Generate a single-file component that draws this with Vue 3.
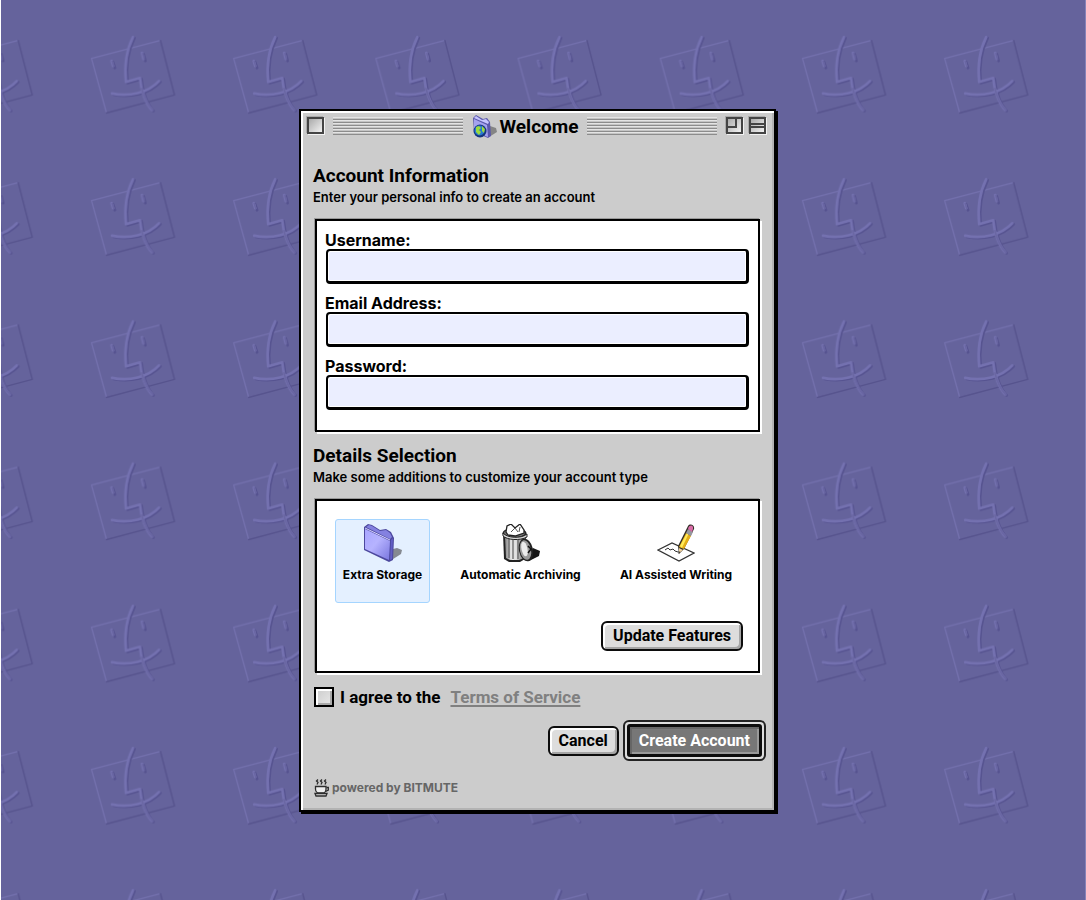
<script setup>
import { ref } from 'vue'

const fields = [
  { id: 'username', label: 'Username:', type: 'text', autocomplete: 'username' },
  { id: 'email', label: 'Email Address:', type: 'email', autocomplete: 'email' },
  { id: 'password', label: 'Password:', type: 'password', autocomplete: 'new-password' },
]
const values = ref({ username: '', email: '', password: '' })

const selected = ref('storage')
const agreed = ref(false)
</script>

<template>
  <div class="desktop">
    <svg class="wallpaper" aria-hidden="true">
      <defs>
        <pattern id="faces" x="78" y="28" width="142.2" height="142.2" patternUnits="userSpaceOnUse">
          <g fill="none" stroke-linecap="round" stroke-linejoin="round">
            <path d="M27.5 85 12.5 30.5 81 12.5" stroke="#7370ad" stroke-width="1.3" />
            <path d="M81.5 12.5 95.5 67 27.5 85" stroke="#56538d" stroke-width="1.5" />
            <g stroke="#565390" stroke-width="2.8" transform="translate(1.4 1)">
              <path d="M54 9C49 19 45 35 47 54L61 50C62 63 67 76 73 82" />
              <path d="M33 65.5C50 69 69 65 80 53" />
              <path d="M32.5 33 34.5 39M63 25 65 32" />
            </g>
            <g stroke="#7471b0" stroke-width="2.6">
              <path d="M54 9C49 19 45 35 47 54L61 50C62 63 67 76 73 82" />
              <path d="M33 65.5C50 69 69 65 80 53" />
              <path d="M32.5 33 34 38M63 25 64.5 31" />
            </g>
            <g stroke="#6966a2" stroke-width="1.5" transform="translate(.6 .4)">
              <path d="M62 60C64 69 68 77 73 82" />
              <path d="M32.5 33 34 38M63 25 64.5 31" />
            </g>
          </g>
        </pattern>
      </defs>
      <rect width="100%" height="100%" fill="url(#faces)" />
    </svg>

    <form class="window" @submit.prevent>
      <header class="titlebar">
        <button type="button" class="box" aria-label="Close"></button>
        <span class="stripes"></span>
        <svg class="title-icon" viewBox="0 0 25 25" aria-hidden="true">
          <path d="M17 23 25 18 24 14 18 12Z" fill="#858585" />
          <path d="M1 4 4 1 11 5 15 4 18 8 19 22 16 24 2 18Z" fill="#5a58ac" />
          <path d="M2 5 15 11 16 23 2 18Z" fill="#a5a3ef" />
          <path d="M2 4 4 2 10 6 14 5 17 8 16 10Z" fill="#c6c5ff" />
          <circle cx="8" cy="17" r="6.5" fill="#15357d" />
          <circle cx="7.5" cy="16.5" r="5" fill="#2879d2" />
          <path d="M4 13 7 12 9 14 7 16 9 18 7 21 4 18ZM10 12 13 15 12 19 10 17Z" fill="#9cda3e" />
        </svg>
        <h1>Welcome</h1>
        <span class="stripes"></span>
        <button type="button" class="box zoom" aria-label="Zoom"><i></i></button>
        <button type="button" class="box collapse" aria-label="Collapse"><i></i></button>
      </header>

      <div class="body">
        <h2>Account Information</h2>
        <p class="hint">Enter your personal info to create an account</p>
        <section class="panel fields">
          <div v-for="f in fields" :key="f.id" class="field">
            <label :for="f.id">{{ f.label }}</label>
            <input :id="f.id" v-model="values[f.id]" :type="f.type" :autocomplete="f.autocomplete" />
          </div>
        </section>

        <h2 class="second">Details Selection</h2>
        <p class="hint">Make some additions to customize your account type</p>
        <section class="panel details">
          <div class="options">
            <button type="button" class="option narrow" :aria-pressed="selected === 'storage'" @click="selected = 'storage'">
              <svg viewBox="0 0 38 38" aria-hidden="true">
                <path d="M26 37 37 30 38 26 33 24 29 25Z" fill="#858991" />
                <path d="M0 3 4 0 8 1 16 6 22 5 27 8 30 14 29 36 25 38 0 26Z" fill="#4c489e" />
                <path d="M2 3 5 1 8 2 16 7 22 6 26 9 28 13 26 15Z" fill="#8481e0" />
                <path d="M1 5 26 17 25 36 1 25Z" fill="url(#folder)" />
                <path d="M1 4 26 16" stroke="#d6d4ff" stroke-width="1" />
                <path d="M27 16 29 14 28 35 26 36Z" fill="#625ec4" />
                <defs>
                  <linearGradient id="folder" x1="0" y1="0" x2="1" y2="1">
                    <stop offset="0" stop-color="#a9a6ff" />
                    <stop offset=".45" stop-color="#b6b3ff" />
                    <stop offset="1" stop-color="#7a77df" />
                  </linearGradient>
                </defs>
              </svg>
              Extra Storage
            </button>
            <button type="button" class="option wide" :aria-pressed="selected === 'archive'" @click="selected = 'archive'">
              <svg viewBox="0 0 38 38" aria-hidden="true">
                <path d="M27 37 37 32 38 27 31 24Z" fill="#171717" />
                <path d="M1 9 24 10 23 35 18 38H7L2 35Z" fill="#222" />
                <path d="M3 12 23 13 22 34 17 36H8L4 34Z" fill="url(#can)" />
                <path d="M7 15V34M11 16V35M16 16V35M20 15V33" stroke="#666" stroke-width="1.3" />
                <path d="M9 16V35M14 16V36" stroke="#eee" stroke-width="1" />
                <ellipse cx="12.5" cy="9.5" rx="12" ry="5.5" fill="#222" />
                <ellipse cx="12.5" cy="9" rx="10.5" ry="4" fill="#777" />
                <path d="M4 8 5 2 9 0 13 4 18 0 22 6 22 9 13 12 6 11Z" fill="#fff" stroke="#222" stroke-width="1.3" />
                <path d="M9 8 13 4 16 8M18 3 17 8" fill="none" stroke="#555" />
                <path d="M1 9C5 14 19 15 25 10V13C18 17 5 16 1 12Z" fill="#d6d6d6" stroke="#222" />
                <ellipse cx="24" cy="26" rx="7" ry="11.5" fill="#222" transform="rotate(-12 24 26)" />
                <ellipse cx="23.5" cy="26" rx="5.5" ry="10" fill="#999" transform="rotate(-12 23.5 26)" />
                <ellipse cx="22.5" cy="25" rx="3" ry="7.5" fill="#ececec" transform="rotate(-12 22.5 25)" />
                <path d="M26 22 29 25 26 29" fill="none" stroke="#111" stroke-width="1.5" />
                <defs>
                  <linearGradient id="can">
                    <stop offset="0" stop-color="#888" />
                    <stop offset=".4" stop-color="#eee" />
                    <stop offset="1" stop-color="#777" />
                  </linearGradient>
                </defs>
              </svg>
              Automatic Archiving
            </button>
            <button type="button" class="option" :aria-pressed="selected === 'writing'" @click="selected = 'writing'">
              <svg viewBox="0 0 38 38" aria-hidden="true">
                <path d="M1 26 15 19 37 29 22 37Z" fill="#fff" stroke="#333" stroke-width="1.3" />
                <path d="M8 26 11 24 13 26 16 25 18 27 21 28" fill="none" stroke="#333" stroke-width="1" />
                <path d="M21 22 31 2C33-1 38 1 37 5L27 25 22 30Z" fill="#302c25" />
                <path d="M22 23 29 9 34 12 27 25Z" fill="#e4ae18" />
                <path d="M23 22 30 9 31.5 10 25 24Z" fill="#ffeb58" />
                <path d="M29 9 31 5 36 8 34 12Z" fill="#96969e" />
                <path d="M31 5C32 0 37 1 36 5L35 8Z" fill="#d96ca8" />
                <path d="M22 24 26 26 22 29Z" fill="#f0d2a0" />
                <path d="M21.5 27 23 28 21.5 30Z" fill="#111" />
              </svg>
              AI Assisted Writing
            </button>
          </div>
          <button type="button" class="push update">Update Features</button>
        </section>

        <div class="agree">
          <input id="agree" v-model="agreed" type="checkbox" />
          <label for="agree">I agree to the</label>
          <a href="#terms">Terms of Service</a>
        </div>

        <div class="actions">
          <button type="button" class="push">Cancel</button>
          <span class="ring"><button type="submit" class="push primary">Create Account</button></span>
        </div>

        <footer>
          <svg viewBox="0 0 15 18" aria-hidden="true">
            <g fill="none" stroke="#2c2c2c" stroke-width="1.3">
              <path d="M4 .5 2.5 2 4 3.5 3 5.5M8 .5 6.5 2 8 3.5 7 5.5M12 .5 10.5 2 12 3.5 11 5.5" />
              <path d="M1.5 7.5H12V10C12 13 10 14 9 14H5C3 14 1.5 12 1.5 10Z" fill="#eee" />
              <path d="M12.5 8.5H14.3V11L11.5 12.5" />
              <path d="M1 14.5H13L12 17H2Z" fill="#ddd" />
            </g>
          </svg>
          powered by BITMUTE
        </footer>
      </div>
    </form>
  </div>
</template>

<style>
body {
  background: #65639c;
}
</style>

<style scoped>
* {
  box-sizing: border-box;
}

.desktop {
  position: relative;
  display: flex;
  justify-content: center;
  align-items: flex-start;
  min-height: 100vh;
  padding: 109px 11px 80px 0;
  border: solid #fff;
  border-width: 0 1px;
  border-right-color: #8583b8;
  background: #65639c;
  color: #000;
  font: bold 16px/18px Roboto, "Liberation Sans", sans-serif;
}

.wallpaper {
  position: absolute;
  inset: 0;
  width: 100%;
  height: 100%;
}

.window {
  position: relative;
  width: 100%;
  max-width: 477px;
  border: 2px solid #000;
  background: #ccc;
  box-shadow: 2px 2px 0 #000, inset 2px 2px 0 #fff, inset -2px -2px 0 #b3b3b3;
}

button {
  padding: 0;
  color: inherit;
  font: inherit;
}

h1,
h2,
p {
  margin: 0;
}

h1,
h2 {
  font-size: 19px;
  line-height: 22px;
}

h1 {
  padding-top: 1px;
}

.titlebar {
  display: flex;
  align-items: center;
  height: 30px;
  padding: 0 8px 0 6px;
}

.box {
  position: relative;
  flex: none;
  width: 17px;
  height: 17px;
  margin-bottom: 2px;
  border: 2px solid #444;
  border-radius: 0;
  background: linear-gradient(135deg, #aaa, #f2f2f2);
  box-shadow: 1px 1px 0 #f2f2f2, -1px -1px 0 #aaa;
}

.zoom i {
  position: absolute;
  top: 0;
  left: 0;
  width: 9px;
  height: 9px;
  border: solid #444;
  border-width: 0 2px 2px 0;
}

.collapse {
  margin-left: 6px;
}

.collapse i {
  position: absolute;
  top: 4px;
  left: 0;
  width: 13px;
  height: 5px;
  border: solid #444;
  border-width: 2px 0;
}

.stripes {
  flex: 1;
  height: 18px;
  margin: 0 9px;
  background: repeating-linear-gradient(#e4e4e4 0 1px, #c4c4c4 1px 2px, #8c8c8c 2px 3px);
}

.title-icon {
  width: 25px;
  height: 25px;
  margin-right: 3px;
}

.body {
  padding: 24px 12px 12px;
}

.second {
  margin-top: 13px;
}

.hint {
  margin: 2px 0 14px;
  font-family: Inter, Roboto, sans-serif;
  font-size: 13px;
  font-weight: 600;
  line-height: 16px;
}

.panel {
  margin: 0 2px;
  border: 2px solid #000;
  background: #fff;
  box-shadow: 2px 2px 0 #fff, -1px -1px 0 #999;
}

.fields {
  display: grid;
  gap: 10px;
  padding: 10px 8px 20px;
}

.field {
  display: grid;
  font-family: Inter, Roboto, sans-serif;
}

.field input {
  height: 35px;
  margin: 0 1px;
  padding: 0 8px;
  border: solid #000;
  border-width: 2px 3px 3px 2px;
  border-radius: 4px;
  outline: none;
  background: #ebeeff;
  box-shadow: inset 1px 1px 0 #fff, inset -1px -1px 0 #fff;
  font: inherit;
}

.details {
  display: flex;
  flex-direction: column;
  padding: 18px 15px 20px 18px;
}

.options {
  display: flex;
  justify-content: space-between;
  padding-right: 2px;
}

.option {
  display: flex;
  flex-direction: column;
  align-items: center;
  gap: 5px;
  width: 130px;
  height: 84px;
  padding-top: 4px;
  border: 1px solid transparent;
  border-radius: 3px;
  background: none;
  font-family: Inter, Roboto, sans-serif;
  font-size: 12px;
  line-height: 16px;
  white-space: nowrap;
}

.narrow {
  width: 95px;
}

.wide {
  width: 140px;
}

.option[aria-pressed="true"] {
  border-color: #a5d5ff;
  background: #e4f0ff;
}

.option svg {
  width: 38px;
  height: 38px;
}

.push {
  height: 30px;
  padding: 0 9px;
  border: 2px solid #0c0c0c;
  border-radius: 6px;
  background: #ddd;
  box-shadow: inset 2px 2px 0 #fff, inset -2px -2px 0 #a5a5a5;
}

.update {
  align-self: flex-end;
  margin-top: 18px;
  padding: 0 10px;
}

.agree {
  display: flex;
  align-items: center;
  gap: 6px;
  margin-top: 14px;
  font-size: 17px;
  line-height: 20px;
}

.agree input {
  appearance: none;
  width: 20px;
  height: 20px;
  margin: 0 0 0 1px;
  border: 2px solid #000;
  background: linear-gradient(135deg, #ccc, #e8e8e8);
  box-shadow: inset 2px 2px 0 #fff, inset -2px -2px 0 #aaa;
}

.agree input:checked {
  background: #444;
}

.agree a {
  margin-left: 4px;
  color: #808080;
  text-decoration-thickness: 2px;
  text-underline-offset: 2px;
}

.actions {
  display: flex;
  align-items: center;
  justify-content: flex-end;
  gap: 4px;
  margin: 13px -4px 0 0;
}

.ring {
  display: flex;
  padding: 2px;
  border: 2px solid #222;
  border-radius: 6px;
  background: #ddd;
}

.primary {
  height: 33px;
  border-width: 3px;
  border-radius: 3px;
  background: #777;
  box-shadow: inset 2px 2px 0 #666, inset -2px -2px 0 #999;
  color: #fff;
}

footer {
  display: flex;
  align-items: center;
  gap: 3px;
  height: 20px;
  margin-top: 17px;
  padding-left: 1px;
  color: #666;
  font-family: Inter, Roboto, sans-serif;
  font-size: 12px;
}

footer svg {
  width: 15px;
  height: 18px;
}
</style>
